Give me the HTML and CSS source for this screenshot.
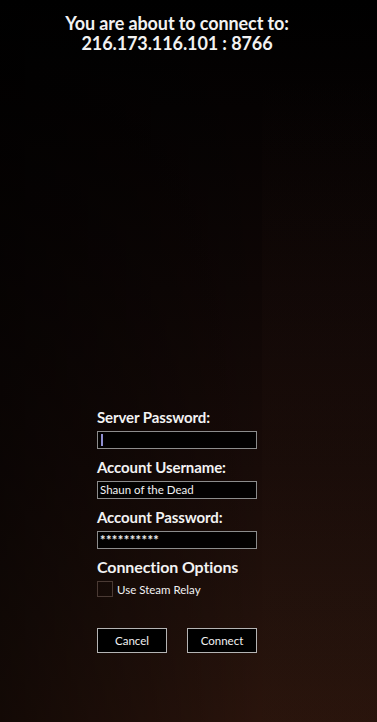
FILE: index.html
```html
<!DOCTYPE html>
<html>
<head>
<meta charset="utf-8">
<link rel="stylesheet" href="styles.css">
</head>
<body>
<div class="screen">
  <div class="band"></div>
  <header class="head">
    <div>You are about to connect to:</div>
    <div>216.173.116.101 : 8766</div>
  </header>
  <form class="form">
    <label class="label">Server Password:</label>
    <div class="field"><span class="caret"></span></div>
    <label class="label">Account Username:</label>
    <div class="field">Shaun of the Dead</div>
    <label class="label">Account Password:</label>
    <div class="field stars">**********</div>
    <div class="section">Connection Options</div>
    <div class="check-row"><span class="box"></span><span>Use Steam Relay</span></div>
    <div class="buttons">
      <div class="btn">Cancel</div>
      <div class="btn">Connect</div>
    </div>
  </form>
</div>
</body>
</html>
```
FILE: styles.css
```css
html, body { margin: 0; padding: 0; }
body {
  width: 377px;
  height: 722px;
  overflow: hidden;
  font-family: Lato, "Open Sans", sans-serif;
  color: #f2f2f2;
}
.screen {
  position: relative;
  width: 377px;
  height: 722px;
  background:
    linear-gradient(90deg, rgba(0,0,0,0.55) 0%, rgba(0,0,0,0.25) 40%, rgba(0,0,0,0) 70%),
    linear-gradient(180deg, #000 0%, #050202 15%, #0e0605 40%, #180b08 65%, #22110b 85%, #2a140c 100%);
  display: flex;
  flex-direction: column;
  align-items: center;
  padding-right: 23px;
  box-sizing: border-box;
}
.band {
  position: absolute;
  left: 262px;
  top: 80px;
  width: 115px;
  height: 642px;
  background: linear-gradient(180deg, rgba(30,16,12,0) 0%, rgba(30,16,12,0.25) 40%, rgba(40,22,14,0.2) 100%);
}
.head {
  position: relative;
  margin-top: 13px;
  text-align: center;
  font-weight: 700;
  font-size: 18px;
  line-height: 20px;
  letter-spacing: -0.1px;
}
.form {
  position: relative;
  margin-top: 355px;
  width: 160px;
  display: flex;
  flex-direction: column;
}
.label {
  font-weight: 700;
  font-size: 15px;
  line-height: 18px;
  height: 18px;
  margin-bottom: 5px;
  letter-spacing: -0.1px;
}
.field {
  height: 18px;
  box-sizing: border-box;
  border: 1px solid #8c8c8c;
  background: rgba(0,0,0,0.85);
  font-size: 11.5px;
  line-height: 16px;
  padding-left: 2px;
  margin-bottom: 9px;
  display: flex;
  align-items: center;
}
.caret {
  width: 2px;
  height: 12px;
  background: #8f8fd0;
  margin-left: 1px;
}
.stars { font-weight: 700; font-size: 13px; letter-spacing: 0.4px; }
.section {
  font-weight: 700;
  font-size: 16px;
  line-height: 18px;
  margin-bottom: 5px;
  letter-spacing: -0.1px;
}
.check-row {
  display: flex;
  align-items: center;
  gap: 4px;
  font-size: 11.5px;
  height: 16px;
}
.box {
  width: 16px;
  height: 16px;
  box-sizing: border-box;
  border: 1px solid #4a3a34;
}
.buttons {
  display: flex;
  justify-content: space-between;
  margin-top: 31px;
}
.btn {
  width: 70px;
  height: 25px;
  box-sizing: border-box;
  border: 1px solid #b4b4b4;
  background: #000;
  font-size: 11.5px;
  display: flex;
  align-items: center;
  justify-content: center;
}
```
